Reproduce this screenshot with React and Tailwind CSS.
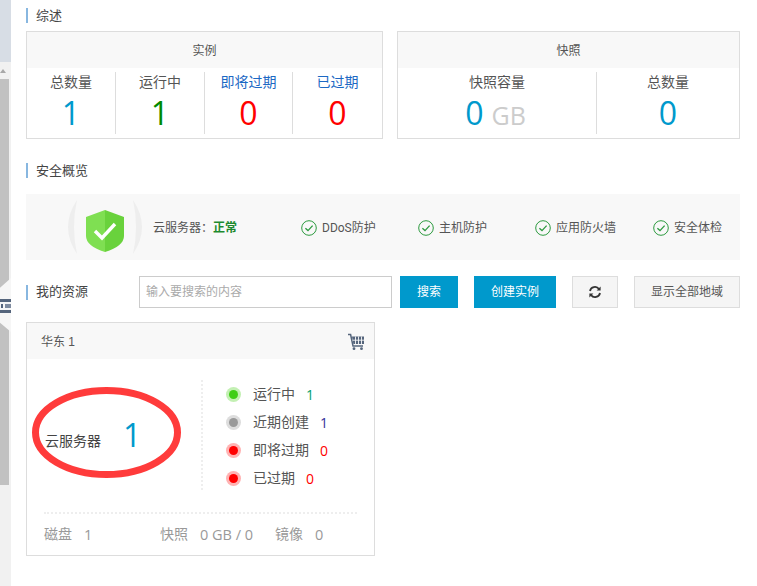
import React from "react";

const font = { fontFamily: '"Liberation Sans", "Noto Sans CJK SC", sans-serif' };
const numFont = { fontFamily: '"Open Sans", sans-serif' };

function Heading({ children, className = "", textClass = "" }) {
  return (
    <div className={"flex items-center h-[15px] border-l-2 border-[#88b7e0] pl-2 text-[13px] leading-[15px] text-[#444] " + className}>
      <span className={textClass}>{children}</span>
    </div>
  );
}

function Stat({ label, labelColor = "text-[#555]", value, valueColor, unit, last }) {
  return (
    <div className={"h-[62px] mt-1 flex flex-col items-center " + (last ? "" : "border-r border-[#ddd]")}>
      <div className={"text-[14px] leading-[20px] " + labelColor}>{label}</div>
      <div className="flex items-baseline text-[32px] leading-[40px] mt-[1px]" style={numFont}>
        <span className={valueColor}>{value}</span>
        {unit && <span className="ml-[8px] mr-[3px] text-[25px] text-[#ccc]">{unit}</span>}
      </div>
    </div>
  );
}

function Card({ title, className, children }) {
  return (
    <div className={"border border-[#ddd] h-[108px] " + className}>
      <div className="h-[36px] pt-[1px] bg-[#f8f8f8] flex items-center justify-center text-[12px] text-[#555]">{title}</div>
      {children}
    </div>
  );
}

function Check({ label }) {
  return (
    <div className="flex items-center gap-[5px] text-[12px] text-[#555]" style={{ fontFamily: 'Roboto, "Noto Sans CJK SC", sans-serif' }}>
      <svg width="16" height="16" viewBox="0 0 16 16" fill="none">
        <circle cx="8" cy="8" r="7.3" stroke="#2c9a3f" strokeWidth="1" />
        <path d="M4.4 8.2 7 10.6 11.6 5.6" stroke="#2c9a3f" strokeWidth="1.3" />
      </svg>
      <span>{label}</span>
    </div>
  );
}

function Dot({ outer, inner, label, value, valueColor }) {
  return (
    <div className="flex items-center h-[28px]">
      <span className={"w-[15px] h-[15px] rounded-full flex items-center justify-center " + outer}>
        <span className={"w-[9px] h-[9px] rounded-full " + inner} />
      </span>
      <span className="ml-[12px] text-[14px] text-[#555]">{label}</span>
      <span className={"text-[14px] ml-[11px] " + valueColor} style={numFont}>{value}</span>
    </div>
  );
}

function Meta({ label, value, className = "" }) {
  return (
    <div className={"flex items-center gap-[12px] " + className}>
      <span>{label}</span>
      <span className="text-[14.5px]" style={numFont}>{value}</span>
    </div>
  );
}

export default function App() {
  return (
    <div className="relative w-[757px] h-[586px] bg-white overflow-hidden flex" style={font}>
      <aside className="relative w-[11px] h-full bg-[#f1f1f1] flex flex-col shrink-0">
        <div className="h-[62px] bg-[#d7dde5]" />
        <div className="h-[17px] pt-[7px]">
          <div className="w-0 h-0 border-l-[3px] border-r-[3px] border-b-[4px] border-l-transparent border-r-transparent border-b-[#a8a8a8]" />
        </div>
        <div className="w-[9px] h-[406px] bg-[#c1c1c1]" />
        <div className="absolute left-0 top-[278px] w-[11px] h-[54px] bg-[#f6f6f6]" style={{ clipPath: "polygon(0 18%, 100% 0, 100% 100%, 0 83%)" }} />
        <div className="absolute left-0 top-[299px] w-[11px] flex flex-col gap-[2px]">
          <div className="h-[3px] bg-[#55657c]" />
          <div className="h-[4px] ml-[5px] bg-[#7f8ca0]" />
          <div className="h-[3px] bg-[#55657c]" />
        </div>
        <div className="absolute left-[1px] top-[304px] w-[2px] h-[4px] bg-[#55657c]" />
      </aside>

      <main className="pl-[15px] w-[729px] pt-[8px] shrink-0">
        <Heading>综述</Heading>
        <div className="flex justify-between mt-[8px]">
          <Card title="实例" className="w-[357px]">
            <div className="grid grid-cols-[89px_89px_88px_1fr]">
              <Stat label="总数量" value="1" valueColor="text-[#0099cc]" />
              <Stat label="运行中" value="1" valueColor="text-[#008a00]" />
              <Stat label="即将过期" labelColor="text-[#1c69c4]" value="0" valueColor="text-[#ff0000]" />
              <Stat label="已过期" labelColor="text-[#1c69c4]" value="0" valueColor="text-[#ff0000]" last />
            </div>
          </Card>
          <Card title="快照" className="w-[343px]">
            <div className="grid grid-cols-[199px_1fr]">
              <Stat label="快照容量" value="0" valueColor="text-[#0099cc]" unit="GB" />
              <Stat label="总数量" value="0" valueColor="text-[#0099cc]" last />
            </div>
          </Card>
        </div>

        <Heading className="mt-[24px]">安全概览</Heading>
        <div className="mt-[16px] h-[66px] bg-[#f8f8f8] flex items-center">
          <svg width="80" height="60" viewBox="0 0 80 60" className="ml-[39px] shrink-0">
            <path d="M12 3 Q-6 30 12 57 Q6 30 12 3 Z" fill="#eeeeee" />
            <path d="M68 3 Q86 30 68 57 Q74 30 68 3 Z" fill="#eeeeee" />
            <path d="M40 13 L59 20 V39 Q59 49 40 55 Z" fill="#69d23c" />
            <path d="M40 13 L21 20 V39 Q21 49 40 55 Z" fill="#7fdf52" />
            <path d="M30 34 L37 41 L50 27" fill="none" stroke="#fff" strokeWidth="3.4" />
          </svg>
          <div className="ml-[8px] mt-[2px] text-[12px] text-[#555] w-[148px] shrink-0">
            云服务器：<span className="font-bold text-[#1d8a2f]">正常</span>
          </div>
          <div className="flex mt-[2px]">
            <div className="w-[117px]"><Check label="DDoS防护" /></div>
            <div className="w-[117px]"><Check label="主机防护" /></div>
            <div className="w-[118px]"><Check label="应用防火墙" /></div>
            <div><Check label="安全体检" /></div>
          </div>
        </div>

        <div className="flex items-center mt-[16px] h-[32px]">
          <Heading className="w-[113px] shrink-0" textClass="-translate-y-px">我的资源</Heading>
          <input
            placeholder="输入要搜索的内容"
            className="w-[253px] h-[32px] border border-[#ccc] px-[6px] text-[12px] outline-none placeholder:text-[#aaa]"
          />
          <button className="ml-[8px] w-[58px] h-[32px] bg-[#0099cc] text-white text-[12px]">搜索</button>
          <button className="ml-[16px] w-[82px] h-[32px] bg-[#0099cc] text-white text-[12px]">创建实例</button>
          <button className="ml-[16px] w-[46px] h-[32px] bg-[#f5f5f5] border border-[#ddd] flex items-center justify-center">
            <svg width="14" height="14" viewBox="0 0 14 14" fill="none" stroke="#333" strokeWidth="1.8">
              <path d="M2 6 A5 5 0 0 1 11 4" />
              <path d="M12 8 A5 5 0 0 1 3 10" />
              <path d="M12.6 1.5 V5.5 H8.6 Z" fill="#333" stroke="none" />
              <path d="M1.4 12.5 V8.5 H5.4 Z" fill="#333" stroke="none" />
            </svg>
          </button>
          <button className="ml-[16px] w-[106px] h-[32px] bg-[#f5f5f5] border border-[#ddd] text-[12px] text-[#555]">显示全部地域</button>
        </div>

        <div className="mt-[14px] w-[349px] h-[234px] border border-[#ddd]">
          <div className="h-[36px] pt-[1px] bg-[#f8f8f8] flex items-center justify-between pl-[14px] pr-[9px] text-[12px] text-[#555]">
            <span>华东 1</span>
            <svg width="18" height="18" viewBox="0 0 18 18" fill="none">
              <path d="M1 1.5 H3.6 L6 13 H16" stroke="#55657c" strokeWidth="1.5" />
              <path d="M5 3.5 H17 V11 H6.4 Z" fill="#55657c" />
              <path d="M8.5 3.5 V11 M11.5 3.5 V11 M14.5 3.5 V11 M5.5 7.2 H17" stroke="#f8f8f8" strokeWidth="0.9" />
              <circle cx="7" cy="15.7" r="1.4" fill="#55657c" />
              <circle cx="14.5" cy="15.7" r="1.4" fill="#55657c" />
            </svg>
          </div>
          <div className="flex h-[132px] mt-[21px]">
            <div className="w-[174px] flex items-start pl-[18px] pt-[35px] shrink-0">
              <span className="text-[14px] leading-[20px] text-[#444] mt-[16px]">云服务器</span>
              <span className="ml-[22px] text-[32px] leading-[40px] text-[#0099cc]" style={numFont}>1</span>
            </div>
            <div className="border-l-2 border-dotted border-[#eee] pl-[23px] h-[110px]">
              <Dot outer="bg-[#c3f0b3]" inner="bg-[#3fce15]" label="运行中" value="1" valueColor="text-[#00a070]" />
              <Dot outer="bg-[#dddddd]" inner="bg-[#999999]" label="近期创建" value="1" valueColor="text-[#333399]" />
              <Dot outer="bg-[#ffb3b3]" inner="bg-[#ff0000]" label="即将过期" value="0" valueColor="text-[#ff0000]" />
              <Dot outer="bg-[#ffb3b3]" inner="bg-[#ff0000]" label="已过期" value="0" valueColor="text-[#ff0000]" />
            </div>
          </div>
          <div className="mx-[17px] border-t-2 border-dotted border-[#eee] flex items-center h-[43px] text-[14px] text-[#999]">
            <Meta label="磁盘" value="1" className="w-[116px]" />
            <Meta label="快照" value="0 GB / 0" className="w-[115px]" />
            <Meta label="镜像" value="0" />
          </div>
        </div>
      </main>

      <svg className="absolute left-[30px] top-[385px] pointer-events-none" width="154" height="96" viewBox="0 0 154 96" fill="none">
        <ellipse cx="76.5" cy="47.5" rx="71" ry="42" stroke="#ff3b3b" strokeWidth="7" />
      </svg>
    </div>
  );
}
